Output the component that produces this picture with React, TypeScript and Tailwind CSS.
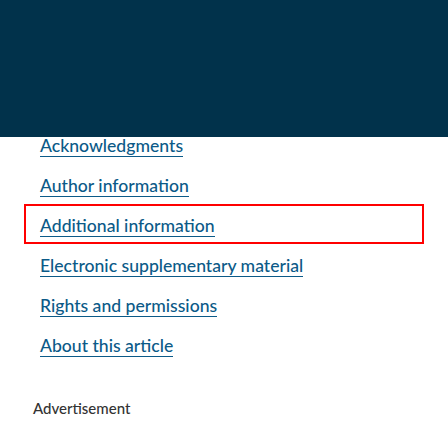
import React from "react";

const items = [
  "Acknowledgments",
  "Author information",
  "Additional information",
  "Electronic supplementary material",
  "Rights and permissions",
  "About this article",
];

export default function App() {
  return (
    <div className="w-[448px] h-[448px] bg-white overflow-hidden" style={{ fontFamily: "Lato, 'Noto Sans', sans-serif" }}>
      <div className="h-[137px] bg-[#01324b]" />
      <ul className="px-6">
        {items.map((t, i) => (
          <li
            key={t}
            className={
              (i === 0 ? "h-[27px] " : "h-10 ") +
              "flex items-end px-4 pb-[7px] " +
              (i === 2 ? "outline-2 outline-[#ff0000] -outline-offset-2" : "")
            }
          >
            <a className="inline-block leading-[20px] text-[17.6px] font-medium text-[#0b5a88] border-b border-[#0b5a88]">
              {t}
            </a>
          </li>
        ))}
      </ul>
      <div className="pl-[33px] pt-[34px] text-[15px] font-medium leading-[20px] text-[#333333]">Advertisement</div>
    </div>
  );
}
